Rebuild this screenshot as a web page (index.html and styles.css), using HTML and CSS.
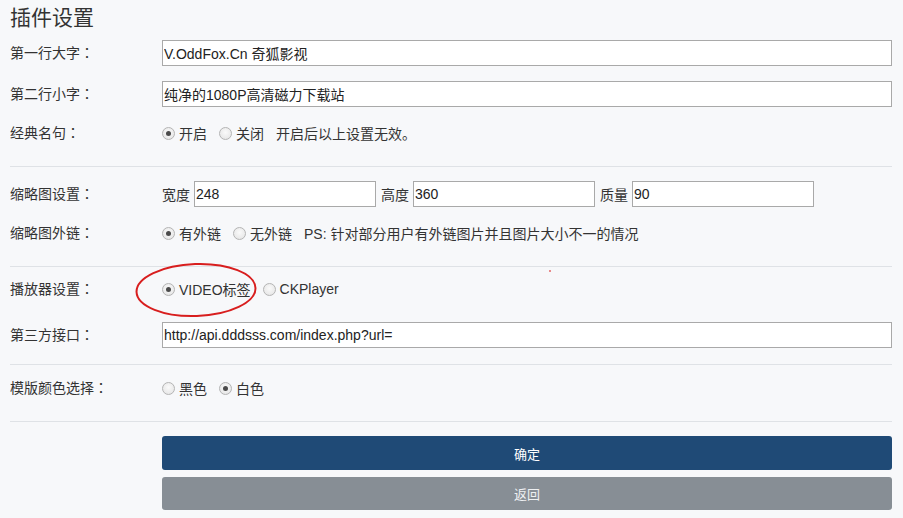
FILE: index.html
```html
<!DOCTYPE html>
<html>
<head>
    <meta charset="utf-8">
    <link rel="stylesheet" href="styles.css">
</head>
<body>
<div class="container">
    <div class="page-title">插件设置</div>

    <div class="section first">
        <div class="row">
            <div class="label">第一行大字</div>
            <div class="field"><input class="text-input" type="text" value="V.OddFox.Cn 奇狐影视"></div>
        </div>
        <div class="row">
            <div class="label">第二行小字</div>
            <div class="field"><input class="text-input" type="text" value="纯净的1080P高清磁力下载站"></div>
        </div>
        <div class="row row-radio">
            <div class="label">经典名句</div>
            <div class="field">
                <label class="opt"><input type="radio" name="quote" checked><span>开启</span></label>
                <label class="opt"><input type="radio" name="quote"><span>关闭</span></label>
                <span class="hint">开启后以上设置无效。</span>
            </div>
        </div>
    </div>

    <div class="section">
        <div class="red-dot"></div>
        <div class="row">
            <div class="label">缩略图设置</div>
            <div class="field">
                <span class="unit">宽度</span><input class="text-input small" type="text" value="248">
                <span class="unit">高度</span><input class="text-input small" type="text" value="360">
                <span class="unit">质量</span><input class="text-input small" type="text" value="90">
            </div>
        </div>
        <div class="row row-radio">
            <div class="label">缩略图外链</div>
            <div class="field">
                <label class="opt"><input type="radio" name="link" checked><span>有外链</span></label>
                <label class="opt"><input type="radio" name="link"><span>无外链</span></label>
                <span class="hint">PS: 针对部分用户有外链图片并且图片大小不一的情况</span>
            </div>
        </div>
    </div>

    <div class="section section-player">
        <div class="row row-radio">
            <div class="label">播放器设置</div>
            <div class="field">
                <label class="opt"><input type="radio" name="player" checked><span>VIDEO标签</span></label>
                <label class="opt"><input type="radio" name="player"><span>CKPlayer</span></label>
                <svg class="circle-mark" width="126" height="58" viewBox="0 0 126 58">
                    <ellipse cx="63" cy="29" rx="59.5" ry="26" transform="rotate(-2 63 29)" fill="none" stroke="#d81e1e" stroke-width="2"/>
                </svg>
            </div>
        </div>
        <div class="row row-gap">
            <div class="label">第三方接口</div>
            <div class="field"><input class="text-input" type="text" value="http://api.dddsss.com/index.php?url="></div>
        </div>
    </div>

    <div class="section section-color">
        <div class="row row-radio">
            <div class="label">模版颜色选择</div>
            <div class="field">
                <label class="opt"><input type="radio" name="color"><span>黑色</span></label>
                <label class="opt"><input type="radio" name="color" checked><span>白色</span></label>
            </div>
        </div>
    </div>

    <div class="actions">
        <button class="btn btn-primary">确定</button>
        <button class="btn btn-back">返回</button>
    </div>
</div>
</body>
</html>
```

FILE: styles.css
```css
body {
    margin: 0;
    background: #f7f8fa;
    font-family: "Liberation Sans", "Noto Sans CJK SC", sans-serif;
    font-size: 14px;
    color: #333;
}
.container {
    padding: 0 11px 0 10px;
}
.page-title {
    font-size: 21px;
    line-height: 24px;
    padding-top: 6px;
    color: #333;
    margin-bottom: 10px;
}
.section {
    position: relative;
    border-top: 1px solid #dfe2e6;
    padding: 14px 0 22px;
}
.section.first {
    border-top: none;
    padding-top: 0;
}
.section-player {
    padding: 11px 0 16px;
}
.section-color {
    padding: 12px 0 22px;
}
.row {
    display: flex;
    align-items: center;
    height: 26px;
    margin-bottom: 15px;
}
.row:last-child {
    margin-bottom: 0;
}
.row-radio {
    height: 22px;
}
.row-gap {
    margin-top: 22px;
}
.label {
    width: 152px;
    flex-shrink: 0;
    font-size: 14px;
    color: #333;
    margin-top: -3px;
}
.label::after {
    content: "：";
    font-family: "Noto Sans CJK JP", sans-serif;
}
.field {
    position: relative;
    flex: 1;
    display: flex;
    align-items: center;
}
.text-input {
    width: 100%;
    height: 26px;
    box-sizing: border-box;
    border: 1px solid #a9a9a9;
    background: #fff;
    padding: 0 1px;
    margin: 0;
    font-family: inherit;
    font-size: 14px;
    color: #222;
    outline: none;
}
.text-input.small {
    width: 182px;
}
.unit {
    margin-right: 4px;
}
.text-input.small + .unit {
    margin-left: 5px;
}
.opt {
    display: flex;
    align-items: center;
    margin-right: 12px;
}
.opt input {
    appearance: none;
    -webkit-appearance: none;
    width: 13px;
    height: 13px;
    margin: 0 4px 0 0;
    border: 1px solid #b4b4b4;
    border-radius: 50%;
    background: radial-gradient(circle at 50% 40%, #fafafa 0%, #e2e2e2 100%);
    box-sizing: border-box;
    position: relative;
}
.opt input:checked::after {
    content: "";
    position: absolute;
    left: 3px;
    top: 3px;
    width: 5px;
    height: 5px;
    border-radius: 50%;
    background: #4a4a4a;
}
.hint {
    color: #333;
}
.circle-mark {
    position: absolute;
    left: -29px;
    top: -18px;
    pointer-events: none;
}
.red-dot {
    position: absolute;
    left: 539px;
    bottom: -6px;
    width: 2px;
    height: 2px;
    background: #e88c8c;
}
.actions {
    border-top: 1px solid #dfe2e6;
    padding: 14px 0 0 152px;
}
.btn {
    display: block;
    width: 100%;
    border: none;
    border-radius: 3px;
    color: #fff;
    font-family: inherit;
    font-size: 13px;
    cursor: pointer;
}
.btn-primary {
    height: 34px;
    background: #1f4a76;
    margin-bottom: 7px;
}
.btn-back {
    height: 33px;
    background: #878e95;
    color: #eef0f2;
}
```
